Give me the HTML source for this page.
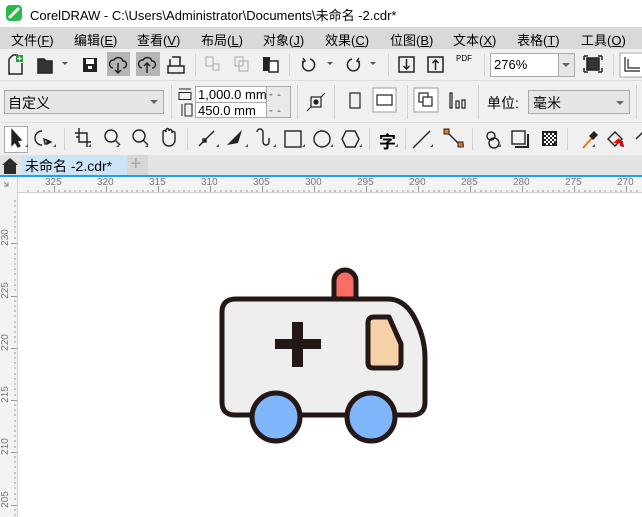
<!DOCTYPE html>
<html><head><meta charset="utf-8">
<style>
*{margin:0;padding:0;box-sizing:border-box}
body{width:642px;height:517px;overflow:hidden;position:relative;background:#fff;font-family:"Liberation Sans","Noto Sans CJK SC",sans-serif;font-size:13px;color:#000}
.a{position:absolute}
svg{position:absolute;overflow:visible}
.menu span{position:absolute;top:3px;font-size:13px}
.sep{position:absolute;width:1px;background:#d0d0d0}
.rl{position:absolute;font-size:10px;color:#777}
</style></head><body>
<!-- title -->
<div class="a" style="left:0;top:0;width:642px;height:27px;background:#fff"></div>
<div class="a" style="left:6px;top:5px;width:16px;height:16px;background:#2db84a;border-radius:4px"></div>
<svg style="left:6px;top:5px" width="16" height="16"><path d="M4 12 L12 4" stroke="#fff" stroke-width="3" stroke-linecap="round"/></svg>
<div class="a" style="left:30px;top:5px;font-size:13px">CorelDRAW - C:\Users\Administrator\Documents\未命名 -2.cdr*</div>
<!-- menu -->
<div class="a menu" style="left:0;top:27px;width:642px;height:22px;background:#d9d9d9">
<span style="left:11px">文件(<u>F</u>)</span><span style="left:74px">编辑(<u>E</u>)</span><span style="left:137px">查看(<u>V</u>)</span><span style="left:201px">布局(<u>L</u>)</span><span style="left:263px">对象(<u>J</u>)</span><span style="left:325px">效果(<u>C</u>)</span><span style="left:390px">位图(<u>B</u>)</span><span style="left:453px">文本(<u>X</u>)</span><span style="left:517px">表格(<u>T</u>)</span><span style="left:581px">工具(<u>O</u>)</span>
</div>
<!-- toolbars bg -->
<div class="a" style="left:0;top:49px;width:642px;height:126px;background:#f0f0f0"></div>
<div class="a" style="left:0;top:80px;width:642px;height:1px;background:#dcdcdc"></div>
<div class="a" style="left:0;top:122px;width:642px;height:1px;background:#dcdcdc"></div>
<div class="a" style="left:0;top:155px;width:642px;height:1px;background:#dcdcdc"></div>
<!-- toolbar1 -->
<svg style="left:0;top:49px" width="642" height="31" fill="none" stroke="#222" stroke-width="1.5">
<path d="M9 10 L13 6 H18 M9 10 V25 H22 V14"/><rect x="16" y="6" width="7" height="7" fill="#2a9d3a" stroke="none"/><path d="M19.5 7.5v4M17.5 9.5h4" stroke="#fff" stroke-width="1.2"/>
<path d="M38 10 H44 L46 12 H52 V24 H38 Z" fill="#333"/><path d="M62 13 l3 3 l3-3" fill="#555" stroke="none"/>
<rect x="83" y="9" width="14" height="14" fill="#222" stroke="none"/><rect x="86" y="10" width="8" height="5" fill="#fff" stroke="none"/><rect x="88" y="17" width="4" height="3" fill="#fff" stroke="none"/>
<rect x="107" y="3" width="23" height="24" fill="#b5b5b5" stroke="none"/><rect x="136" y="3" width="24" height="24" fill="#b5b5b5" stroke="none"/>
<path d="M113 19 a4 4 0 0 1 1-8 a5 5 0 0 1 9 1 a3.5 3.5 0 0 1 0 7 M118 14 v10 m-3-3 l3 3 l3-3"/>
<path d="M142 19 a4 4 0 0 1 1-8 a5 5 0 0 1 9 1 a3.5 3.5 0 0 1 0 7 M147 24 v-10 m-3 3 l3-3 l3 3"/>
<path d="M172 8 H180 V17 M168 17 H184 V24 H168 Z M170 17 V10"/>
<g stroke="#aaa" stroke-width="1"><rect x="206" y="8" width="7" height="9"/><rect x="213" y="15" width="6" height="6"/><rect x="235" y="8" width="8" height="9"/><rect x="239" y="12" width="9" height="10"/></g>
<rect x="263" y="8" width="7" height="14" fill="#222" stroke="none"/><rect x="269" y="12" width="9" height="11" fill="#fff"/>
<path d="M304 12 a6 6 0 1 0 6 -2 M303 9 l2 3 l-3 1"/><path d="M327 13 l3 3 l3-3" fill="#555" stroke="none"/>
<path d="M358 12 a6 6 0 1 1 -6 -2 M359 9 l-2 3 l3 1"/><path d="M370 13 l3 3 l3-3" fill="#555" stroke="none"/>
<rect x="399" y="8" width="15" height="15"/><path d="M406.5 10v10m-3-3l3 3l3-3"/>
<rect x="428" y="8" width="15" height="15"/><path d="M435.5 21v-10m-3 3l3-3l3 3"/>
<rect x="587" y="9" width="12" height="12" fill="#333"/><path d="M584 7 h4 M584 7v4 M602 7h-4 M602 7v4 M584 23h4 M584 23v-4 M602 23h-4 M602 23v-4"/>
<rect x="620" y="4" width="24" height="24" fill="#fff" stroke="#aaa" stroke-width="1"/><path d="M625 8 V22 H640 M628 10 V19 H640" stroke-width="1.2"/>
</svg>
<div class="a" style="left:456px;top:55px;font-size:8px;line-height:8px">PDF</div>
<div class="a" style="left:490px;top:53px;width:85px;height:24px;background:#fff;border:1px solid #aaa"></div>
<div class="a" style="left:558px;top:54px;width:16px;height:22px;background:#e6e6e6;border-left:1px solid #aaa"></div>
<svg style="left:562px;top:63px" width="8" height="4"><path d="M0 0h8l-4 4z" fill="#666"/></svg>
<div class="a" style="left:494px;top:57px">276%</div>
<div class="sep" style="left:195px;top:54px;height:22px"></div><div class="sep" style="left:289px;top:54px;height:22px"></div><div class="sep" style="left:388px;top:54px;height:22px"></div><div class="sep" style="left:484px;top:54px;height:22px"></div><div class="sep" style="left:613px;top:54px;height:22px"></div>
<!-- toolbar2 -->
<div class="a" style="left:4px;top:90px;width:160px;height:24px;background:#e6e6e6;border:1px solid #aaa"></div>
<div class="a" style="left:8px;top:93px;font-size:14px">自定义</div>
<svg style="left:150px;top:100px" width="8" height="4"><path d="M0 0h8l-4 4z" fill="#666"/></svg>
<div class="sep" style="left:171px;top:85px;height:34px"></div>
<div class="a" style="left:195px;top:86px;width:72px;height:32px;background:#fff;border:1px solid #aaa"></div>
<div class="a" style="left:195px;top:102px;width:72px;height:1px;background:#aaa"></div>
<div class="a" style="left:266px;top:86px;width:25px;height:32px;background:#e9e9e9;border:1px solid #aaa"></div>
<div class="a" style="left:198px;top:87px;font-size:13px">1,000.0 mm</div>
<div class="a" style="left:198px;top:103px;font-size:13px">450.0 mm</div>
<svg style="left:178px;top:86px" width="120" height="32" fill="none" stroke="#222" stroke-width="1"><path d="M1 3h12 M1 6.5h12v7h-12z M4 18v12 M7 18h7v12h-7z"/><path d="M91 8l2 2l2-2z M99 10l2-2l2 2z M91 24l2 2l2-2z M99 26l2-2l2 2z" fill="#888" stroke="none"/></svg>
<div class="sep" style="left:297px;top:85px;height:34px"></div>
<svg style="left:306px;top:92px" width="22" height="22" fill="none" stroke="#222" stroke-width="1.2"><rect x="5" y="5" width="10" height="10"/><circle cx="10" cy="10" r="2" fill="#222"/><path d="M1 19l4-4 M15 5l4-4"/></svg>
<div class="sep" style="left:334px;top:85px;height:34px"></div>
<svg style="left:340px;top:88px" width="80" height="30" fill="none" stroke="#222" stroke-width="1.2"><rect x="10" y="5" width="10" height="15"/><rect x="33" y="0" width="23" height="24" fill="#fff" stroke="#aaa"/><rect x="37" y="7" width="15" height="10"/></svg>
<div class="sep" style="left:407px;top:85px;height:34px"></div>
<svg style="left:414px;top:88px" width="60" height="30" fill="none" stroke="#222" stroke-width="1.2"><rect x="0" y="0" width="24" height="24" fill="#fff" stroke="#aaa"/><rect x="5" y="5" width="9" height="9"/><rect x="9" y="9" width="9" height="9" fill="#fff"/><path d="M36 5v15h2v-15z M42 13v7h3v-7z M48 12v8h3v-8z"/></svg>
<div class="sep" style="left:478px;top:85px;height:34px"></div>
<div class="a" style="left:487px;top:93px;font-size:14px">单位:</div>
<div class="a" style="left:528px;top:90px;width:102px;height:24px;background:#e6e6e6;border:1px solid #aaa"></div>
<div class="a" style="left:533px;top:93px;font-size:14px">毫米</div>
<svg style="left:616px;top:101px" width="8" height="4"><path d="M0 0h8l-4 4z" fill="#666"/></svg>
<div class="sep" style="left:636px;top:85px;height:34px"></div>
<!-- toolbar3 -->
<div class="a" style="left:4px;top:126px;width:24px;height:27px;background:#fff;border:1px solid #aaa"></div>
<svg style="left:0;top:123px" width="642" height="32" fill="none" stroke="#222" stroke-width="1.4">
<path d="M12 7 V22 L15 19 L18 24 L20 23 L17 18 L21 17 Z" fill="#222"/>
<path d="M42 8 a5 5 0 0 0 0 14 M44 16 l6 3 l-5 2z" /><path d="M47 17 l4 2 l-4 2z" fill="#222"/>
<path d="M79 5 v14 h12 M75 10 h12 v14 M76 14 h3"/>
<circle cx="111" cy="13" r="6"/><path d="M115 17 l5 5"/>
<circle cx="139" cy="13" r="6"/><path d="M143 17 l5 5"/>
<path d="M163 14 v-5 a1.5 1.5 0 0 1 3 0 v-2 a1.5 1.5 0 0 1 3 0 v1 a1.5 1.5 0 0 1 3 0 v2 a1.5 1.5 0 0 1 3 0 v7 a6 6 0 0 1 -12 0 v-5"/>
<path d="M199 23 L214 8"/><rect x="203" y="16" width="3" height="3" fill="#222"/>
<path d="M227 22 L233 16 L242 7 L238 20 Z" fill="#222" stroke="none"/>
<path d="M257 9 a3 3 0 0 1 6 0 v10 a3 3 0 0 0 6 0 v-4"/>
<rect x="285" y="8" width="16" height="16"/>
<circle cx="322" cy="16" r="8"/>
<path d="M346 8 h9 l4 8 l-4 8 h-9 l-4 -8z"/>
<path d="M413 25 L430 8"/>
<path d="M448 10 l12 12" stroke="#222"/><rect x="444" y="6" width="5" height="5" fill="#e87722" stroke="#222" stroke-width="1"/><rect x="458" y="19" width="5" height="5" fill="#e87722" stroke="#222" stroke-width="1"/>
<circle cx="491" cy="13" r="4"/><circle cx="494" cy="20" r="5"/>
<rect x="512" y="8" width="13" height="13"/><path d="M515 24 h13 v-13" stroke-width="2"/>
<rect x="542" y="8" width="15" height="15" fill="#222" stroke="none"/>
<path d="M544 10h2v2h-2zM548 10h2v2h-2zM552 10h2v2h-2zM546 12h2v2h-2zM550 12h2v2h-2zM554 12h2v2h-2zM544 14h2v2h-2zM548 14h2v2h-2zM552 14h2v2h-2zM546 16h2v2h-2zM550 16h2v2h-2zM554 16h2v2h-2zM544 18h2v2h-2zM548 18h2v2h-2zM552 18h2v2h-2zM546 20h2v2h-2zM550 20h2v2h-2z" fill="#fff" stroke="none"/>
<path d="M583 25 L592 15" stroke="#e87722" stroke-width="2"/><path d="M590 13 l4 -4 l3 3 l-4 4z" fill="#222"/>
<path d="M608 16 l7-7 l7 7 l-7 7z"/><path d="M613 20 l6-5 l2 5z" fill="#e00" stroke="none"/><rect x="620" y="18" width="3" height="5" fill="#e00" stroke="none"/>
<path d="M636 16 l7-7"/>
</svg>
<div class="a" style="left:379px;top:128px;font-size:17px;font-weight:bold">字</div>
<svg style="left:0;top:123px" width="642" height="32"><g fill="#555"><path d="M25 24h3v-3zM53 24h3v-3zM88 24h3v-3zM116 24h3v-3zM145 24h3v-3zM216 24h3v-3zM245 24h3v-3zM273 24h3v-3zM302 24h3v-3zM330 24h3v-3zM359 24h3v-3zM395 24h3v-3zM430 24h3v-3zM461 24h3v-3zM498 24h3v-3zM592 24h3v-3zM621 24h3v-3z"/></g></svg>
<div class="sep" style="left:64px;top:128px;height:22px"></div><div class="sep" style="left:187px;top:128px;height:22px"></div><div class="sep" style="left:369px;top:128px;height:22px"></div><div class="sep" style="left:405px;top:128px;height:22px"></div><div class="sep" style="left:472px;top:128px;height:22px"></div><div class="sep" style="left:567px;top:128px;height:22px"></div>
<!-- tab bar -->
<div class="a" style="left:0;top:155px;width:642px;height:20px;background:#e3e3e3"></div>
<svg style="left:1px;top:157px" width="18" height="17"><path d="M1 8 L9 1 L17 8 H15 V17 H3 V8 Z" fill="#2b2b2b"/></svg>
<div class="a" style="left:21px;top:155px;width:106px;height:20px;background:#cce4f7"></div>
<div class="a" style="left:25px;top:156px;font-size:14px">未命名 -2.cdr*</div>
<div class="a" style="left:127px;top:155px;width:21px;height:20px;background:#d6d6d6"></div>
<div class="a" style="left:130px;top:153px;font-size:20px;color:#a8a8a8">+</div>
<div class="a" style="left:0;top:175px;width:642px;height:2px;background:#1ea0f0"></div>
<!-- rulers -->
<div class="a" style="left:0;top:177px;width:642px;height:16px;background:#f3f3f3;border-bottom:1px solid #cfcfcf"></div>
<div class="a" style="left:0;top:177px;width:18px;height:340px;background:#f3f3f3;border-right:1px solid #cfcfcf"></div>
<svg style="left:0;top:177px" width="642" height="340">
<g fill="#888"><path d="M4 5 l4 4 M8 5 v4 h-4" stroke="#888" fill="none"/></g>
<g stroke="#888" stroke-width="1" id="tt"></g>
<path id="th" d="" stroke="#888"/>
</svg>
<div class="rl" style="left:45px;top:177px">325</div><div class="rl" style="left:97px;top:177px">320</div><div class="rl" style="left:149px;top:177px">315</div><div class="rl" style="left:201px;top:177px">310</div><div class="rl" style="left:253px;top:177px">305</div><div class="rl" style="left:305px;top:177px">300</div><div class="rl" style="left:357px;top:177px">295</div><div class="rl" style="left:409px;top:177px">290</div><div class="rl" style="left:461px;top:177px">285</div><div class="rl" style="left:513px;top:177px">280</div><div class="rl" style="left:565px;top:177px">275</div><div class="rl" style="left:617px;top:177px">270</div>
<div class="rl" style="left:-3px;top:232px;transform:rotate(-90deg)">230</div>
<div class="rl" style="left:-3px;top:285px;transform:rotate(-90deg)">225</div>
<div class="rl" style="left:-3px;top:337px;transform:rotate(-90deg)">220</div>
<div class="rl" style="left:-3px;top:389px;transform:rotate(-90deg)">215</div>
<div class="rl" style="left:-3px;top:441px;transform:rotate(-90deg)">210</div>
<div class="rl" style="left:-3px;top:494px;transform:rotate(-90deg)">205</div>
<svg style="left:0;top:0" width="642" height="517" stroke="#999" stroke-width="1">
<path d="M54.5 186v6 M106.5 186v6 M158.5 186v6 M210.5 186v6 M262.5 186v6 M314.5 186v6 M366.5 186v6 M418.5 186v6 M470.5 186v6 M522.5 186v6 M574.5 186v6 M626.5 186v6"/>
<path d="M28 190v2 M38 190v2 M44 190v2 M49 190v2 M59 190v2 M65 190v2 M70 190v2 M75 190v2 M80 190v2 M86 190v2 M91 190v2 M96 190v2 M101 190v2 M111 190v2 M117 190v2 M122 190v2 M127 190v2 M132 190v2 M137 190v2 M143 190v2 M148 190v2 M153 190v2 M163 190v2 M169 190v2 M174 190v2 M179 190v2 M184 190v2 M189 190v2 M195 190v2 M200 190v2 M205 190v2 M215 190v2 M221 190v2 M226 190v2 M231 190v2 M236 190v2 M241 190v2 M247 190v2 M252 190v2 M257 190v2 M267 190v2 M273 190v2 M278 190v2 M283 190v2 M288 190v2 M293 190v2 M299 190v2 M304 190v2 M309 190v2 M319 190v2 M325 190v2 M330 190v2 M335 190v2 M340 190v2 M345 190v2 M351 190v2 M356 190v2 M361 190v2 M371 190v2 M377 190v2 M382 190v2 M387 190v2 M392 190v2 M397 190v2 M403 190v2 M408 190v2 M413 190v2 M423 190v2 M429 190v2 M434 190v2 M439 190v2 M444 190v2 M449 190v2 M455 190v2 M460 190v2 M465 190v2 M475 190v2 M481 190v2 M486 190v2 M491 190v2 M496 190v2 M501 190v2 M507 190v2 M512 190v2 M517 190v2 M527 190v2 M533 190v2 M538 190v2 M543 190v2 M548 190v2 M553 190v2 M559 190v2 M564 190v2 M569 190v2 M579 190v2 M585 190v2 M590 190v2 M595 190v2 M600 190v2 M605 190v2 M611 190v2 M616 190v2 M621 190v2 M631 190v2 M637 190v2"/>
<path d="M11 243.5h6 M11 296.5h6 M11 348.5h6 M11 400.5h6 M11 452.5h6 M11 505.5h6"/>
<path d="M14 201h2 M14 206h2 M14 212h2 M14 217h2 M14 222h2 M14 227h2 M14 232h2 M14 238h2 M14 248h2 M14 254h2 M14 259h2 M14 264h2 M14 269h2 M14 274h2 M14 280h2 M14 285h2 M14 290h2 M14 301h2 M14 306h2 M14 311h2 M14 316h2 M14 322h2 M14 327h2 M14 332h2 M14 337h2 M14 342h2 M14 353h2 M14 358h2 M14 363h2 M14 368h2 M14 374h2 M14 379h2 M14 384h2 M14 389h2 M14 395h2 M14 405h2 M14 410h2 M14 415h2 M14 421h2 M14 426h2 M14 431h2 M14 436h2 M14 441h2 M14 447h2 M14 457h2 M14 462h2 M14 467h2 M14 473h2 M14 478h2 M14 483h2 M14 488h2 M14 494h2 M14 499h2 M14 510h2 M14 515h2"/>
</svg>
<!-- ambulance -->
<svg style="left:0;top:0" width="642" height="517">
<g stroke="#231815" stroke-width="5" stroke-linejoin="round">
<path d="M334 299 V281 a11 11 0 0 1 22 0 V299 Z" fill="#fd6d64"/>
<path d="M236 299 H388 Q403 299 413 315 Q425 336 425 358 V402 Q425 415 412 415 H235 Q222 415 222 402 V312 Q222 299 236 299 Z" fill="#eeeeee"/>
<path d="M374 317 H389 L401 344 V363 Q401 368 396 368 H373 Q368 368 368 363 V323 Q368 317 374 317 Z" fill="#f6d1a8"/>
<circle cx="276" cy="417" r="24" fill="#80b6fb"/>
<circle cx="371" cy="417" r="24" fill="#80b6fb"/>
</g>
<path d="M292 322h11v17h18v10h-18v18h-11v-18h-17v-10h17z" fill="#231815"/>
</svg>
</body></html>
